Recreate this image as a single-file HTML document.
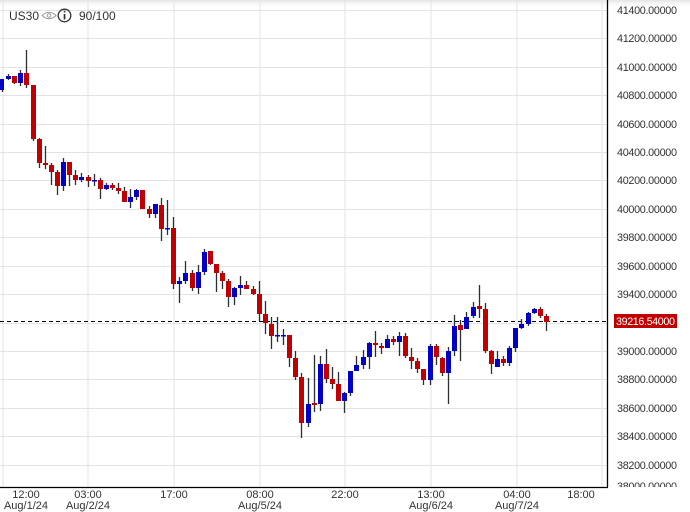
<!DOCTYPE html>
<html><head><meta charset="utf-8"><style>
html,body{margin:0;padding:0;background:#fff;width:690px;height:512px;overflow:hidden;font-family:"Liberation Sans",Arial,sans-serif}
svg{position:absolute;left:0;top:0}
</style></head><body>
<svg width="690" height="512" xmlns="http://www.w3.org/2000/svg" font-family="Liberation Sans, Arial, sans-serif">
<defs><linearGradient id="tg" x1="0" y1="0" x2="0" y2="1"><stop offset="0" stop-color="#e4e4e4"/><stop offset="1" stop-color="#fff" stop-opacity="0"/></linearGradient></defs>
<rect x="0" y="0" width="690" height="8" fill="url(#tg)"/>
<g stroke="#e3e3e3" stroke-width="1">
<path d="M3 0V487M88 0V487M174 0V487M260 0V487M345 0V487M431 0V487M517 0V487M602 0V487"/>
<path d="M0 10.5H607M0 38.5H607M0 67.5H607M0 95.5H607M0 124.5H607M0 152.5H607M0 180.5H607M0 209.5H607M0 237.5H607M0 266.5H607M0 294.5H607M0 323.5H607M0 351.5H607M0 379.5H607M0 408.5H607M0 436.5H607M0 465.5H607"/>
</g>
<path d="M607.5 0V487.5H0" stroke="#000" stroke-width="1.3" fill="none"/>
<line x1="0" y1="321.5" x2="607" y2="321.5" stroke="#000" stroke-dasharray="4,3" stroke-width="1"/>
<g stroke="#2a2f33" stroke-width="1.3">
<path d="M2.5 79V92M8.5 74V80M14.5 76V84M20.5 70V86M26.5 50V88M33.5 85V141M39.5 138V168M45.5 146V169M51.5 163V185M57.5 170V195M63.5 158V191M69.5 162V186M75.5 170V185M81.5 173V182M88.5 175V187M94.5 174V186M100.5 178V199M106.5 183V190M112.5 183V190M118.5 183V194M124.5 187V202M130.5 189V208M136.5 189V200M142.5 190V209M149.5 206V218M155.5 204V218M161.5 198V241M167.5 200V235M173.5 217V289M179.5 277V303M185.5 261V284M192.5 270V291M198.5 265V294M204.5 249V275M210.5 251V265M216.5 264V292M222.5 271V289M228.5 279V307M234.5 287V305M240.5 276V295M246.5 281V289M253.5 286V295M259.5 281V321M265.5 301V334M271.5 317V349M277.5 317V342M283.5 329V345M289.5 335V367M295.5 351V380M301.5 373V438M308.5 378V427M314.5 355V412M320.5 356V411M326.5 349V383M332.5 367V389M338.5 372V401M344.5 392V413M350.5 371V396M356.5 356V371M363.5 350V369M369.5 342V369M375.5 331V357M381.5 343V354M387.5 335V348M393.5 336V345M399.5 332V356M405.5 333V358M411.5 348V369M417.5 358V373M423.5 369V385M430.5 344V385M436.5 344V365M442.5 357V376M448.5 347V404M454.5 315V356M460.5 320V361M466.5 312V329M473.5 302V318M479.5 285V318M485.5 303V353M491.5 350V374M497.5 351V367M503.5 356V366M509.5 346V366M515.5 328V352M521.5 319V329M528.5 312V326M534.5 308V314M540.5 307V318M546.5 314V331"/>
</g>
<g fill="#c00000">
<rect x="12" y="76" width="5" height="7"/><rect x="24" y="73" width="5" height="12"/><rect x="31" y="85" width="5" height="54"/><rect x="37" y="139" width="5" height="24"/><rect x="43" y="163" width="5" height="2"/><rect x="49" y="165" width="5" height="7"/><rect x="55" y="172" width="5" height="14"/><rect x="67" y="162" width="5" height="13"/><rect x="73" y="175" width="5" height="5"/><rect x="86" y="177" width="5" height="4"/><rect x="98" y="180" width="5" height="9"/><rect x="110" y="185" width="5" height="3"/><rect x="116" y="188" width="5" height="3"/><rect x="122" y="191" width="5" height="11"/><rect x="140" y="190" width="5" height="19"/><rect x="147" y="209" width="5" height="5"/><rect x="159" y="205" width="5" height="24"/><rect x="171" y="228" width="5" height="56"/><rect x="190" y="273" width="5" height="15"/><rect x="208" y="251" width="5" height="13"/><rect x="214" y="264" width="5" height="9"/><rect x="220" y="273" width="5" height="8"/><rect x="226" y="281" width="5" height="16"/><rect x="244" y="285" width="5" height="4"/><rect x="251" y="289" width="5" height="5"/><rect x="257" y="294" width="5" height="20"/><rect x="263" y="314" width="5" height="9"/><rect x="269" y="324" width="5" height="12"/><rect x="287" y="335" width="5" height="23"/><rect x="293" y="358" width="5" height="19"/><rect x="299" y="377" width="5" height="46"/><rect x="312" y="403" width="5" height="2"/><rect x="324" y="364" width="5" height="15"/><rect x="330" y="379" width="5" height="5"/><rect x="336" y="384" width="5" height="17"/><rect x="373" y="343" width="5" height="2"/><rect x="379" y="346" width="5" height="2"/><rect x="391" y="339" width="5" height="3"/><rect x="403" y="336" width="5" height="20"/><rect x="409" y="357" width="5" height="4"/><rect x="415" y="361" width="5" height="8"/><rect x="421" y="369" width="5" height="11"/><rect x="434" y="346" width="5" height="11"/><rect x="440" y="358" width="5" height="15"/><rect x="458" y="325" width="5" height="5"/><rect x="477" y="306" width="5" height="3"/><rect x="483" y="309" width="5" height="42"/><rect x="489" y="351" width="5" height="13"/><rect x="501" y="359" width="5" height="4"/><rect x="538" y="309" width="5" height="7"/><rect x="544" y="316" width="5" height="6"/>
</g>
<g fill="#0000c8">
<rect x="0" y="79" width="4" height="11"/><rect x="6" y="76" width="5" height="3"/><rect x="18" y="73" width="5" height="10"/><rect x="61" y="162" width="5" height="24"/><rect x="79" y="177" width="5" height="3"/><rect x="92" y="180" width="5" height="1.5"/><rect x="104" y="185" width="5" height="4"/><rect x="128" y="197" width="5" height="5"/><rect x="134" y="190" width="5" height="7"/><rect x="153" y="204" width="5" height="10"/><rect x="165" y="228" width="5" height="1.5"/><rect x="177" y="281" width="5" height="3"/><rect x="183" y="273" width="5" height="8"/><rect x="196" y="272" width="5" height="16"/><rect x="202" y="252" width="5" height="20"/><rect x="232" y="288" width="5" height="9"/><rect x="238" y="285" width="5" height="3"/><rect x="275" y="335" width="5" height="1.5"/><rect x="281" y="335" width="5" height="1.5"/><rect x="306" y="404" width="5" height="19"/><rect x="318" y="364" width="5" height="40"/><rect x="342" y="393" width="5" height="8"/><rect x="348" y="371" width="5" height="22"/><rect x="354" y="365" width="5" height="6"/><rect x="361" y="357" width="5" height="8"/><rect x="367" y="343" width="5" height="14"/><rect x="385" y="339" width="5" height="9"/><rect x="397" y="336" width="5" height="6"/><rect x="428" y="346" width="5" height="34"/><rect x="446" y="351" width="5" height="22"/><rect x="452" y="326" width="5" height="25"/><rect x="464" y="317" width="5" height="12"/><rect x="471" y="307" width="5" height="9"/><rect x="495" y="359" width="5" height="8"/><rect x="507" y="348" width="5" height="15"/><rect x="513" y="328" width="5" height="20"/><rect x="519" y="324" width="5" height="4"/><rect x="526" y="313" width="5" height="11"/><rect x="532" y="309" width="5" height="4"/>
</g>
<g font-size="10.8" fill="#333">
<text x="617" y="14" textLength="60">41400.00000</text><text x="617" y="42" textLength="60">41200.00000</text><text x="617" y="71" textLength="60">41000.00000</text><text x="617" y="99" textLength="60">40800.00000</text><text x="617" y="128" textLength="60">40600.00000</text><text x="617" y="156" textLength="60">40400.00000</text><text x="617" y="184" textLength="60">40200.00000</text><text x="617" y="213" textLength="60">40000.00000</text><text x="617" y="241" textLength="60">39800.00000</text><text x="617" y="270" textLength="60">39600.00000</text><text x="617" y="298" textLength="60">39400.00000</text><text x="617" y="355" textLength="60">39000.00000</text><text x="617" y="383" textLength="60">38800.00000</text><text x="617" y="412" textLength="60">38600.00000</text><text x="617" y="440" textLength="60">38400.00000</text><text x="617" y="469" textLength="60">38200.00000</text><text x="617" y="490" textLength="60">38000.00000</text>
</g>
<rect x="614" y="314" width="63" height="14" fill="#c00000"/>
<text x="616" y="325" font-size="10.8" fill="#fff" textLength="59">39216.54000</text>
<rect x="608" y="487" width="82" height="25" fill="#fff"/>
<g font-size="11" fill="#333" text-anchor="middle">
<text x="26" y="498">12:00</text><text x="26" y="509">Aug/1/24</text>
<text x="88" y="498">03:00</text><text x="88" y="509">Aug/2/24</text>
<text x="174" y="498">17:00</text>
<text x="260" y="498">08:00</text><text x="260" y="509">Aug/5/24</text>
<text x="345" y="498">22:00</text>
<text x="431" y="498">13:00</text><text x="431" y="509">Aug/6/24</text>
<text x="517" y="498">04:00</text><text x="517" y="509">Aug/7/24</text>
<text x="581" y="498">18:00</text>
</g>
<text x="9" y="20" font-size="12" fill="#333">US30</text>
<g fill="none" stroke="#999" stroke-width="1">
<path d="M42 15.5Q49 9 56 15.5Q49 22 42 15.5Z"/><circle cx="49" cy="15.5" r="1.8"/>
</g>
<circle cx="64.5" cy="15.5" r="6.3" fill="none" stroke="#333" stroke-width="1.3"/>
<rect x="63.7" y="14" width="1.7" height="5.5" fill="#333"/><rect x="63.7" y="10.8" width="1.7" height="1.7" fill="#333"/>
<text x="79" y="20" font-size="12" fill="#333">90/100</text>
</svg>
</body></html>
